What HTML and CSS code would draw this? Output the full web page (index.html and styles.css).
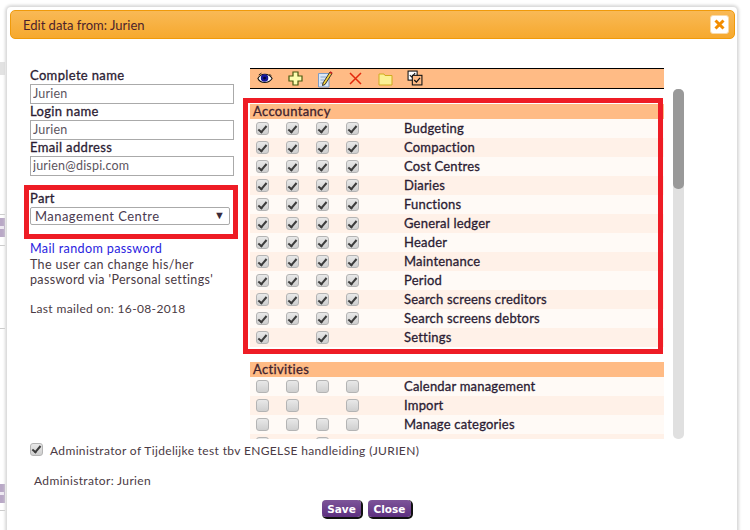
FILE: index.html
```html
<!DOCTYPE html>
<html lang="en">
<head>
  <meta charset="UTF-8">
  <title>Edit data</title>
  <link rel="stylesheet" href="styles.css">
</head>
<body>

  <!-- bit of the page behind the dialog -->
  <div class="behind">
    <span class="behind-grey"></span>
    <span class="behind-line behind-line1"></span>
    <span class="behind-chip behind-chip1"></span>
    <span class="behind-line behind-line2"></span>
    <span class="behind-line behind-line3"></span>
    <span class="behind-chip behind-chip2"></span>
    <span class="behind-line behind-line4"></span>
  </div>

  <div class="dialog">
    <div class="titlebar">
      <span class="title">Edit data from: Jurien</span>
      <button class="close-x" type="button" aria-label="Close">
        <svg width="11" height="11" viewBox="0 0 11 11"><path d="M1.5 1.5 L9.5 9.5 M9.5 1.5 L1.5 9.5" stroke="#f28c00" stroke-width="3" fill="none"/></svg>
      </button>
    </div>

    <div class="content">
      <div class="left-col">
        <label class="field-label">Complete name</label>
        <input class="field" type="text" value="Jurien">
        <label class="field-label">Login name</label>
        <input class="field" type="text" value="Jurien">
        <label class="field-label">Email address</label>
        <input class="field" type="text" value="jurien@dispi.com">

        <div class="part-box">
          <label class="field-label part-label">Part</label>
          <div class="select-wrap">
            <select class="part-select">
              <option>Management Centre</option>
            </select>
          </div>
        </div>

        <a class="mail-link" href="#">Mail random password</a>
        <p class="info">The user can change his/her<br>password via 'Personal settings'</p>
        <p class="info last-mailed">Last mailed on: 16-08-2018</p>
      </div>

      <div class="right-col">
        <div class="toolbar">
          <span class="tool">
            <svg width="16" height="13" viewBox="0 0 18 14"><path d="M1 7 C4 1 13 0 17 7 C13 13 4 13 1 7 Z" fill="#fff" stroke="#111" stroke-width="1.2"/><circle cx="8.5" cy="6.5" r="4.2" fill="#16189a"/><circle cx="8.5" cy="6.5" r="1.6" fill="#05052e"/><path d="M2 3 L5 1 M14 2 L16 4" stroke="#111"/></svg>
          </span>
          <span class="tool">
            <svg width="15" height="15" viewBox="0 0 15 15"><path d="M5 1 H10 V5 H14 V10 H10 V14 H5 V10 H1 V5 H5 Z" fill="#fdfdb0" stroke="#4a5a10" stroke-width="1.2"/></svg>
          </span>
          <span class="tool">
            <svg width="16" height="18" viewBox="0 0 16 18"><path d="M1.5 3.5 H12 V17 H1.5 Z" fill="#dce8f6" stroke="#7d9cc6"/><path d="M3.5 7 H9 M3.5 10 H7 M3.5 13 H9" stroke="#8aa6cc"/><path d="M6 13 L13 2 L15 3.5 L8 14.5 L5.5 15.5 Z" fill="#f4d23c" stroke="#222" stroke-width=".9"/><path d="M13 2 L15 3.5" stroke="#c81e1e" stroke-width="1.6"/></svg>
          </span>
          <span class="tool">
            <svg width="13" height="13" viewBox="0 0 13 13"><path d="M1 1 L12 12 M12 1 L1 12" stroke="#e3290c" stroke-width="1.5" fill="none"/></svg>
          </span>
          <span class="tool">
            <svg width="15" height="14" viewBox="0 0 15 14"><path d="M1 2 H6 L7 3.5 H14 V13 H1 Z" fill="#fbf094" stroke="#d1ab1f"/></svg>
          </span>
          <span class="tool tool-up">
            <svg width="16" height="16" viewBox="0 0 15 15"><rect x="1" y="1" width="8.5" height="8.5" fill="#fff" stroke="#111"/><path d="M2.6 4.8 L4.4 6.6 L7.6 3" stroke="#111" fill="none"/><rect x="5" y="5" width="9" height="9" fill="#ffbb85" stroke="#111"/><path d="M6.8 9.4 L8.8 11.4 L12.2 7.4" stroke="#111" stroke-width="1.2" fill="none"/></svg>
          </span>
        </div>

        <div class="list-area">
          <div class="list-scroll">
            <div class="section">
              <div class="section-head">Accountancy</div>
              <div class="row"><input class="chk" type="checkbox" checked><input class="chk" type="checkbox" checked><input class="chk" type="checkbox" checked><input class="chk" type="checkbox" checked><span class="row-name">Budgeting</span></div>
              <div class="row"><input class="chk" type="checkbox" checked><input class="chk" type="checkbox" checked><input class="chk" type="checkbox" checked><input class="chk" type="checkbox" checked><span class="row-name">Compaction</span></div>
              <div class="row"><input class="chk" type="checkbox" checked><input class="chk" type="checkbox" checked><input class="chk" type="checkbox" checked><input class="chk" type="checkbox" checked><span class="row-name">Cost Centres</span></div>
              <div class="row"><input class="chk" type="checkbox" checked><input class="chk" type="checkbox" checked><input class="chk" type="checkbox" checked><input class="chk" type="checkbox" checked><span class="row-name">Diaries</span></div>
              <div class="row"><input class="chk" type="checkbox" checked><input class="chk" type="checkbox" checked><input class="chk" type="checkbox" checked><input class="chk" type="checkbox" checked><span class="row-name">Functions</span></div>
              <div class="row"><input class="chk" type="checkbox" checked><input class="chk" type="checkbox" checked><input class="chk" type="checkbox" checked><input class="chk" type="checkbox" checked><span class="row-name">General ledger</span></div>
              <div class="row"><input class="chk" type="checkbox" checked><input class="chk" type="checkbox" checked><input class="chk" type="checkbox" checked><input class="chk" type="checkbox" checked><span class="row-name">Header</span></div>
              <div class="row"><input class="chk" type="checkbox" checked><input class="chk" type="checkbox" checked><input class="chk" type="checkbox" checked><input class="chk" type="checkbox" checked><span class="row-name">Maintenance</span></div>
              <div class="row"><input class="chk" type="checkbox" checked><input class="chk" type="checkbox" checked><input class="chk" type="checkbox" checked><input class="chk" type="checkbox" checked><span class="row-name">Period</span></div>
              <div class="row"><input class="chk" type="checkbox" checked><input class="chk" type="checkbox" checked><input class="chk" type="checkbox" checked><input class="chk" type="checkbox" checked><span class="row-name">Search screens creditors</span></div>
              <div class="row"><input class="chk" type="checkbox" checked><input class="chk" type="checkbox" checked><input class="chk" type="checkbox" checked><input class="chk" type="checkbox" checked><span class="row-name">Search screens debtors</span></div>
              <div class="row"><input class="chk" type="checkbox" checked><span class="gap"></span><input class="chk" type="checkbox" checked><span class="gap"></span><span class="row-name">Settings</span></div>
            </div>
            <div class="section">
              <div class="section-head">Activities</div>
              <div class="row"><input class="chk" type="checkbox"><input class="chk" type="checkbox"><input class="chk" type="checkbox"><input class="chk" type="checkbox"><span class="row-name">Calendar management</span></div>
              <div class="row"><input class="chk" type="checkbox"><input class="chk" type="checkbox"><span class="gap"></span><input class="chk" type="checkbox"><span class="row-name">Import</span></div>
              <div class="row"><input class="chk" type="checkbox"><input class="chk" type="checkbox"><input class="chk" type="checkbox"><input class="chk" type="checkbox"><span class="row-name">Manage categories</span></div>
              <div class="row"><input class="chk" type="checkbox"><span class="gap"></span><input class="chk" type="checkbox"><span class="gap"></span><span class="row-name"></span></div>
            </div>
          </div>
          <div class="scrollbar"><div class="scroll-thumb"></div></div>
          <div class="red-box"></div>
        </div>
      </div>
    </div>

    <div class="admin-row">
      <input class="chk" type="checkbox" checked>
      <span class="admin-text">Administrator of Tijdelijke test tbv ENGELSE handleiding (JURIEN)</span>
    </div>
    <p class="admin-name">Administrator: Jurien</p>

    <div class="actions">
      <button class="btn btn-save" type="button">Save</button>
      <button class="btn btn-close" type="button">Close</button>
    </div>
  </div>

</body>
</html>
```

FILE: styles.css
```css
/* Reset */
body, p {
    margin: 0;
    padding: 0;
}

body {
    height: 530px;
    overflow: hidden;
    background: #fff;
    font-family: 'Lato', 'Open Sans', sans-serif;
    font-size: 13px;
    letter-spacing: 0.35px;
    color: #4a3a44;
}

/* Page behind the dialog */
.behind {
    position: absolute;
    left: 0;
    top: 0;
    width: 5px;
    height: 530px;
    overflow: hidden;
}

.behind-grey {
    position: absolute;
    left: 0;
    top: 62px;
    width: 5px;
    height: 13px;
    background: #e2e2e2;
}

.behind-chip {
    position: absolute;
    left: 0;
    width: 6px;
    height: 19px;
    background: #b9a8c6;
}

.behind-chip::after {
    content: "";
    position: absolute;
    left: 0;
    top: 8px;
    width: 4px;
    height: 3px;
    background: #efeaf3;
}

.behind-chip1 { top: 218px; }
.behind-chip2 { top: 484px; }

.behind-line {
    position: absolute;
    left: 0;
    width: 6px;
    height: 1px;
    background: #ccc;
}

.behind-line1 { top: 214px; }
.behind-line2 { top: 245px; }
.behind-line3 { top: 328px; }
.behind-line4 { top: 510px; }

/* Dialog */
.dialog {
    position: relative;
    box-sizing: border-box;
    width: 730px;
    height: 540px;
    margin: 7px 0 0 7px;
    padding: 3px;
    background: #fff;
    border-radius: 4px 4px 0 0;
    box-shadow: 0 0 3px 2px #d8d8d8;
}

.titlebar {
    box-sizing: border-box;
    display: flex;
    align-items: center;
    justify-content: space-between;
    width: 725px;
    height: 29px;
    padding: 0 5px 0 12px;
    border: 1px solid #f09a0a;
    border-radius: 5px;
    background: linear-gradient(#f9b956, #f6a92e);
}

.title {
    font-size: 13px;
    letter-spacing: 0;
    color: #4c1f2c;
}

.close-x {
    display: flex;
    align-items: center;
    justify-content: center;
    width: 19px;
    height: 19px;
    padding: 0;
    border: 1px solid #f8d9a8;
    border-radius: 3px;
    background: #fff;
}

.content {
    display: flex;
    align-items: flex-start;
    padding-top: 29px;
}

/* Left column */
.left-col {
    width: 220px;
    padding-left: 20px;
    flex: none;
}

.field-label {
    display: block;
    height: 15.5px;
    line-height: 15px;
    color: #2b1c33;
    -webkit-text-stroke: 0.3px #2b1c33;
}

.field {
    display: block;
    box-sizing: border-box;
    width: 204px;
    height: 20.5px;
    padding: 0 2px;
    border: 1px solid #aaa;
    font-family: inherit;
    font-size: 12.5px;
    letter-spacing: 0.2px;
    color: #5c5560;
}

.part-box {
    box-sizing: border-box;
    width: 214px;
    height: 54px;
    margin: 9px 0 0 -6px;
    padding: 1px 0 0 1px;
    border: 5px solid #ee1c25;
}

.part-label {
    height: 15.5px;
}

.select-wrap {
    position: relative;
    width: 200px;
}

.select-wrap::after {
    content: "▼";
    position: absolute;
    right: 5px;
    top: 1px;
    font-size: 11px;
    letter-spacing: 0;
    color: #3a2a3a;
}

.part-select {
    display: block;
    appearance: none;
    box-sizing: border-box;
    width: 200px;
    height: 18.5px;
    padding: 0 4px;
    border: 1px solid #aaa;
    border-radius: 2px;
    background: #fff;
    font-family: inherit;
    font-size: 13px;
    letter-spacing: 0.45px;
    color: #4a3a50;
}

.mail-link {
    display: block;
    margin-top: 2px;
    font-size: 12.6px;
    line-height: 15.5px;
    color: #2a1de0;
    text-decoration: none;
}

.info {
    font-size: 12.5px;
    line-height: 15.5px;
}

.last-mailed {
    margin-top: 13px;
    font-size: 12px;
}

/* Right column */
.right-col {
    width: 434px;
}

.toolbar {
    box-sizing: border-box;
    display: flex;
    align-items: center;
    width: 414px;
    height: 21px;
    border-top: 1px solid #000;
    border-bottom: 1px solid #000;
    background: #ffbb85;
}

.tool {
    display: flex;
    align-items: center;
    justify-content: center;
    width: 30px;
}

.tool-up {
    margin-bottom: 2px;
}

.list-area {
    position: relative;
    display: flex;
    align-items: flex-start;
    height: 350px;
}

.list-scroll {
    box-sizing: border-box;
    width: 414px;
    height: 350px;
    padding-top: 15px;
    overflow: hidden;
}

.section {
    margin-bottom: 15px;
}

.section-head {
    height: 15px;
    padding-left: 3px;
    line-height: 15px;
    background: #ffbb85;
    color: #40222e;
    -webkit-text-stroke: 0.3px #40222e;
}

.row {
    display: grid;
    grid-template-columns: repeat(4, 30px) 1fr;
    align-items: center;
    height: 19px;
    background: #fffaf6;
}

.row:nth-child(odd) {
    background: #fff1e8;
}

.row-name {
    padding: 0 0 1px 34px;
    letter-spacing: 0.2px;
    color: #2b1c33;
    -webkit-text-stroke: 0.3px #2b1c33;
}

/* Checkboxes */
.chk {
    appearance: none;
    position: relative;
    display: block;
    box-sizing: border-box;
    width: 13px;
    height: 13px;
    margin: 0 0 0 6px;
    border: 1px solid #b4b4b4;
    border-radius: 3px;
    background: linear-gradient(#e8e8e8, #cfcfcf);
}

.chk:checked::after {
    content: "";
    position: absolute;
    left: 3px;
    top: 0.5px;
    width: 3px;
    height: 7px;
    border-right: 2px solid #3c3c3c;
    border-bottom: 2px solid #3c3c3c;
    transform: rotate(40deg);
}

.scrollbar {
    width: 11px;
    height: 350px;
    margin-left: 9px;
    border-radius: 5px;
    background: #e0e0e0;
}

.scroll-thumb {
    height: 100px;
    border-radius: 5px;
    background: #999;
}

/* annotation laid over the list */
.red-box {
    position: absolute;
    left: -7px;
    top: 9px;
    box-sizing: border-box;
    width: 420px;
    height: 256px;
    border: 5px solid #ee1c25;
}

/* Bottom */
.admin-row {
    display: flex;
    align-items: center;
    gap: 7px;
    height: 20px;
    margin-left: 14px;
}

.admin-row .chk {
    flex: none;
}

.admin-text {
    padding-top: 3px;
    font-size: 12px;
}

.admin-name {
    margin: 14px 0 0 24px;
    font-size: 12px;
    line-height: 16px;
}

.actions {
    display: flex;
    gap: 7px;
    margin: 11px 0 0 312px;
}

.btn {
    height: 17px;
    padding: 0;
    border: none;
    border-radius: 4px;
    background: linear-gradient(#7d5599, #5d2f80);
    box-shadow: 1px 1px 0 1px #111;
    color: #fff;
    font-family: 'DejaVu Sans', sans-serif;
    font-size: 10.5px;
    font-weight: bold;
    letter-spacing: 0;
}

.btn-save {
    width: 39px;
}

.btn-close {
    width: 43px;
}
```
